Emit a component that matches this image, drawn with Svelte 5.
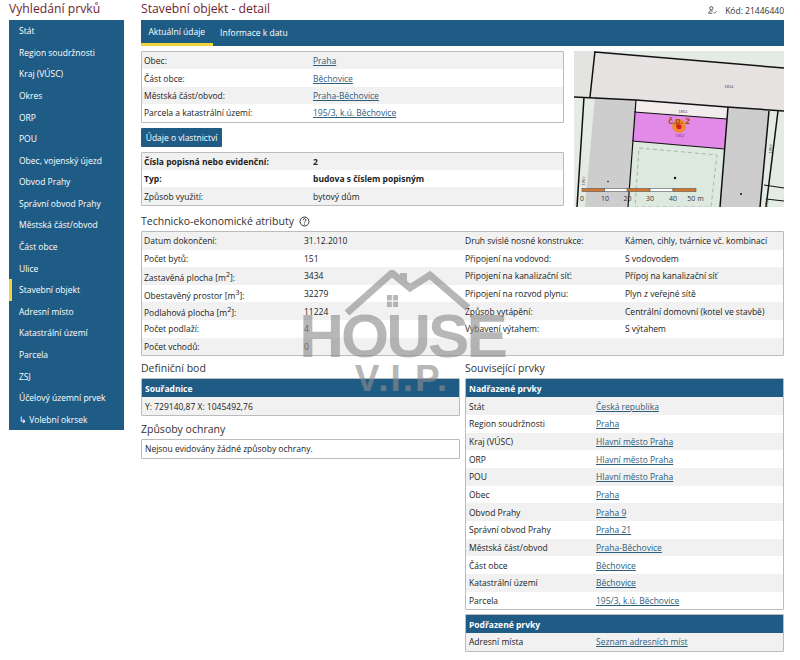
<script>
  const navItems = [
    'Stát', 'Region soudržnosti', 'Kraj (VÚSC)', 'Okres', 'ORP', 'POU',
    'Obec, vojenský újezd', 'Obvod Prahy', 'Správní obvod Prahy', 'Městská část/obvod',
    'Část obce', 'Ulice', 'Stavební objekt', 'Adresní místo', 'Katastrální území',
    'Parcela', 'ZSJ', 'Účelový územní prvek', '↳ Volební okrsek'
  ];

  const place = [
    ['Obec:', 'Praha'],
    ['Část obce:', 'Běchovice'],
    ['Městská část/obvod:', 'Praha-Běchovice'],
    ['Parcela a katastrální území:', '195/3, k.ú. Běchovice']
  ];

  const techRows = [
    ['Datum dokončení:', '31.12.2010', 'Druh svislé nosné konstrukce:', 'Kámen, cihly, tvárnice vč. kombinací'],
    ['Počet bytů:', '151', 'Připojení na vodovod:', 'S vodovodem'],
    ['Zastavěná plocha [m²]:', '3434', 'Připojení na kanalizační síť:', 'Přípoj na kanalizační síť'],
    ['Obestavěný prostor [m³]:', '32279', 'Připojení na rozvod plynu:', 'Plyn z veřejné sítě'],
    ['Podlahová plocha [m²]:', '11224', 'Způsob vytápění:', 'Centrální domovní (kotel ve stavbě)'],
    ['Počet podlaží:', '4', 'Vybavení výtahem:', 'S výtahem'],
    ['Počet vchodů:', '0', '', '']
  ];

  const parents = [
    ['Stát', 'Česká republika'],
    ['Region soudržnosti', 'Praha'],
    ['Kraj (VÚSC)', 'Hlavní město Praha'],
    ['ORP', 'Hlavní město Praha'],
    ['POU', 'Hlavní město Praha'],
    ['Obec', 'Praha'],
    ['Obvod Prahy', 'Praha 9'],
    ['Správní obvod Prahy', 'Praha 21'],
    ['Městská část/obvod', 'Praha-Běchovice'],
    ['Část obce', 'Běchovice'],
    ['Katastrální území', 'Běchovice'],
    ['Parcela', '195/3, k.ú. Běchovice']
  ];

  const scaleBar = [
    [8, '#d2762f'], [30.5, '#fff'], [53, '#d2762f'], [76, '#fff'], [99, '#d2762f']
  ];
  const scaleLabels = [[8, '0'], [31, '10'], [53.5, '20'], [76, '30'], [99, '40'], [121.5, '50 m']];
</script>

<div class="page">
  <aside>
    <h2>Vyhledání prvků</h2>
    <nav>
      {#each navItems as item}
        <a href="#top" class:active={item === 'Stavební objekt'}>{item}</a>
      {/each}
    </nav>
  </aside>

  <main>
    <div class="title-row">
      <h2>Stavební objekt - detail</h2>
      <div class="code">
        <svg width="9" height="8" viewBox="0 0 11 10" fill="none" stroke="#333">
          <circle cx="4" cy="2.8" r="2" />
          <path d="M.8 9c0-2 1.4-3 3.2-3 .8 0 1.4.2 1.900.5M.8 9h4.400M7 8.500l1 .5 2.500-2.500" />
        </svg>
        <span>Kód: 21446440</span>
      </div>
    </div>

    <div class="tabs">
      <span class="tab current">Aktuální údaje</span>
      <span class="tab">Informace k datu</span>
    </div>

    <div class="top">
      <div class="top-left">
        <div class="box">
          {#each place as [label, value]}
            <div class="row loc"><span>{label}</span><a href="#top">{value}</a></div>
          {/each}
        </div>

        <button>Údaje o vlastnictví</button>

        <div class="box">
          <div class="row loc"><b>Čísla popisná nebo evidenční:</b><b>2</b></div>
          <div class="row loc"><b>Typ:</b><b>budova s číslem popisným</b></div>
          <div class="row loc"><span>Způsob využití:</span><span>bytový dům</span></div>
        </div>
      </div>

      <svg class="map" width="210" height="156" viewBox="0 0 210 156">
        <rect width="210" height="156" fill="#e4eae4" />
        <polygon points="21,0 210,16 210,60 153,56 62,49 18,46 0,45 17,37" fill="#e7e2e2" />
        <polygon points="0,0 21,0 17,37 0,45" fill="#e3e3e1" />
        <polygon points="62,49 153,56 152,68 60,61" fill="#f2ecec" />
        <polygon points="21,46 62,49 54,156 11,156" fill="#cdcdcd" />
        <polygon points="154,56 195,60 186,156 146,156" fill="#cdcdcd" />
        <polygon points="60,61 153,68 151,98 58,90" fill="#e28ae8" />
        <polygon points="58,91 151,98 146,156 54,156" fill="#dde9de" />
        <polygon points="65,97 143,104 137,156 61,156" fill="none" stroke="#a8b8a8" stroke-dasharray="4 3" />
        <g fill="none" stroke="#111" stroke-width="1.5">
          <path d="M21 0 16 46M21 1 210 17M0 46 62 49 153 56 210 60" />
          <path d="M62 49 54 156M60 61 153 68M58 90 151 98" stroke-width="1.2" />
          <path d="M154 56 146 156M10 46 3 156M195 60 186 156M204 60 192 156" />
          <path d="M190 134 210 137M192 148 210 150" stroke-width="1" />
        </g>
        <circle cx="34" cy="130.5" r=".8" fill="#111" />
        <circle cx="101" cy="127" r="1.2" fill="#111" />
        <circle cx="167" cy="143" r="1" fill="#111" />
        <g class="map-small">
          <text x="155" y="37">1814</text>
          <text x="109" y="62">1851</text>
          <text x="106" y="86" fill="#7a2a9a">1852</text>
          <text transform="translate(11 130) rotate(-85)">1857</text>
          <text transform="translate(198 98) rotate(-85)">1853</text>
          <text transform="translate(194 152) rotate(-85)">1855</text>
        </g>
        <ellipse cx="105" cy="75" rx="7" ry="7" fill="#f08a1c" opacity=".85" />
        <circle cx="105" cy="75.7" r="2.5" fill="#e01a10" />
        <text class="cp" x="105" y="72.5">č.p. 2</text>
        {#each scaleBar as [x, fill]}
          <rect x={x} y="137.5" width="23" height="3" fill={fill} stroke="#555" stroke-width=".6" />
        {/each}
        {#each scaleLabels as [x, label]}
          <text class="scale" x={x} y="150">{label}</text>
        {/each}
      </svg>
    </div>

    <h3 class="tech-title">
      Technicko-ekonomické atributy
      <svg width="11" height="11" viewBox="0 0 11 11" fill="none" stroke="#333">
        <circle cx="5.5" cy="5.5" r="4.5" />
        <path d="M4 4.300c0-2 3-2 3-.2 0 1.200-1.500 1.100-1.500 2.400M5.500 7.600v1" />
      </svg>
    </h3>
    <div class="box tech">
      {#each techRows as [l1, v1, l2, v2]}
        <div class="row techrow">
          <span>{@html l1.replace('²', '<sup>2</sup>').replace('³', '<sup>3</sup>')}</span>
          <span>{v1}</span>
          <span>{l2}</span>
          <span>{v2}</span>
        </div>
      {/each}
    </div>

    <div class="columns">
      <div class="col">
        <h3>Definiční bod</h3>
        <div class="box">
          <div class="head">Souřadnice</div>
          <div class="row rel">Y: 729140,87 X: 1045492,76</div>
        </div>
        <h3 class="next">Způsoby ochrany</h3>
        <div class="box">
          <div class="row rel">Nejsou evidovány žádné způsoby ochrany.</div>
        </div>
      </div>

      <div class="col">
        <h3>Související prvky</h3>
        <div class="box">
          <div class="head">Nadřazené prvky</div>
          {#each parents as [label, value]}
            <div class="row rel"><span>{label}</span><a href="#top">{value}</a></div>
          {/each}
        </div>
        <div class="box sub">
          <div class="head">Podřazené prvky</div>
          <div class="row rel"><span>Adresní místa</span><a href="#top">Seznam adresních míst</a></div>
        </div>
      </div>
    </div>
  </main>

  <div class="watermark">
    <svg width="134" height="50" viewBox="0 0 134 50" fill="none" stroke="#8c8c8c" stroke-width="7">
      <path d="M3 43 48 3 66 18 86 5 124 38" />
      <path d="M56 12V3h7v15" fill="#8c8c8c" stroke="none" />
      <path d="M43 25h11v12H43z" fill="#8c8c8c" stroke="none" />
      <path d="M48.500 25v12M43 31h11" stroke="#e8e8e8" stroke-width="1.5" />
    </svg>
    <div class="wm-house">HOUSE</div>
    <div class="wm-vip">V.I.P.</div>
  </div>
</div>

<style>
  :global(body) {
    background: #fff;
    color: #222;
    font-family: "Open Sans", "Noto Sans", sans-serif;
    font-size: 8.5px;
  }

  .page {
    position: relative;
    display: flex;
    gap: 17px;
    width: 800px;
    height: 660px;
    padding-left: 9px;
    box-sizing: border-box;
    overflow: hidden;
  }

  h2 {
    margin: 0;
    height: 20px;
    line-height: 18px;
    font-size: 12.2px;
    font-weight: 400;
    color: #6e1f30;
    white-space: nowrap;
  }

  aside {
    width: 115px;
    flex: none;
  }

  nav {
    display: flex;
    flex-direction: column;
    background: #1f5c85;
    height: 410px;
  }

  nav a {
    flex: 1;
    display: flex;
    align-items: center;
    padding-left: 10px;
    color: #fff;
    text-decoration: none;
    white-space: nowrap;
  }

  nav a.active {
    border-left: 3px solid #f0d43c;
    padding-left: 7px;
  }

  main {
    width: 643px;
    flex: none;
  }

  .title-row {
    display: flex;
    justify-content: space-between;
  }

  .code {
    display: flex;
    align-items: center;
    gap: 8px;
    height: 20px;
    color: #333;
  }

  .tabs {
    display: flex;
    height: 26px;
    background: #1f5c85;
    color: #fff;
  }

  .tab {
    display: flex;
    align-items: center;
    padding: 0 7.5px 1px;
    box-sizing: border-box;
  }

  .tab.current {
    border-bottom: 3px solid #f0d43c;
    padding-bottom: 0;
  }

  .top {
    display: flex;
    justify-content: space-between;
    margin-top: 5px;
  }

  .top-left {
    width: 423px;
  }

  .map {
    display: block;
  }

  .map-small {
    font-family: "Liberation Sans", sans-serif;
    font-size: 4px;
    fill: #444;
    text-anchor: middle;
  }

  .cp {
    font-family: "Liberation Sans", sans-serif;
    font-size: 8.5px;
    font-weight: 700;
    fill: #a8460a;
    text-anchor: middle;
  }

  .scale {
    font-size: 7px;
    fill: #333;
    text-anchor: middle;
  }

  .box {
    border: 1px solid #bbb;
    border-radius: 1px;
    background: #fff;
  }

  .row {
    display: grid;
    align-items: center;
    height: 17.4px;
    padding-left: 2px;
    white-space: nowrap;
  }

  .box > .row:nth-child(odd) {
    background: #f1f1f1;
  }

  .row a {
    color: #2f5d7c;
  }

  .row b {
    font-weight: 700;
  }

  .loc {
    grid-template-columns: 169px 1fr;
  }

  button {
    display: block;
    margin: 5px 0 5px;
    height: 19px;
    width: 81px;
    padding: 0;
    border: none;
    border-radius: 1px;
    background: #1f5c85;
    color: #fff;
    font: inherit;
  }

  h3 {
    margin: 0;
    height: 20px;
    line-height: 20px;
    font-size: 10.5px;
    font-weight: 400;
    color: #333;
    white-space: nowrap;
  }

  .tech-title {
    display: flex;
    align-items: center;
    gap: 5px;
    margin-top: 4px;
  }

  .techrow {
    grid-template-columns: 160px 161px 160px 1fr;
  }

  .tech .row {
    height: 17.6px;
  }

  .columns {
    display: grid;
    grid-template-columns: 319px 319px;
    gap: 5px;
    margin-top: 2.3px;
  }

  .head {
    display: flex;
    align-items: center;
    height: 18px;
    padding-left: 3px;
    background: #1f5c85;
    color: #fff;
    font-weight: 700;
  }

  .next {
    margin-top: 3px;
  }

  .rel {
    grid-template-columns: 127px 1fr;
    height: 17.65px;
    padding-left: 3px;
  }

  .box > .rel:nth-child(even) {
    background: #f1f1f1;
  }

  .box > .rel:nth-child(odd) {
    background: #fff;
  }

  .sub {
    margin-top: 4px;
  }

  .watermark {
    position: absolute;
    left: 290px;
    top: 270px;
    width: 224px;
    display: flex;
    flex-direction: column;
    align-items: center;
    opacity: 0.62;
    pointer-events: none;
  }

  .watermark svg {
    align-self: flex-start;
    margin-left: 54px;
  }

  .wm-house {
    margin-top: -12px;
    font-family: "Liberation Sans", sans-serif;
    font-size: 62px;
    font-weight: 700;
    line-height: 56px;
    color: #8c8c8c;
    letter-spacing: -3px;
  }

  .wm-vip {
    margin-top: -3px;
    font-family: "Liberation Sans", sans-serif;
    font-size: 37px;
    font-weight: 700;
    line-height: 36px;
    color: #8c8c8c;
    letter-spacing: 2px;
  }
</style>
